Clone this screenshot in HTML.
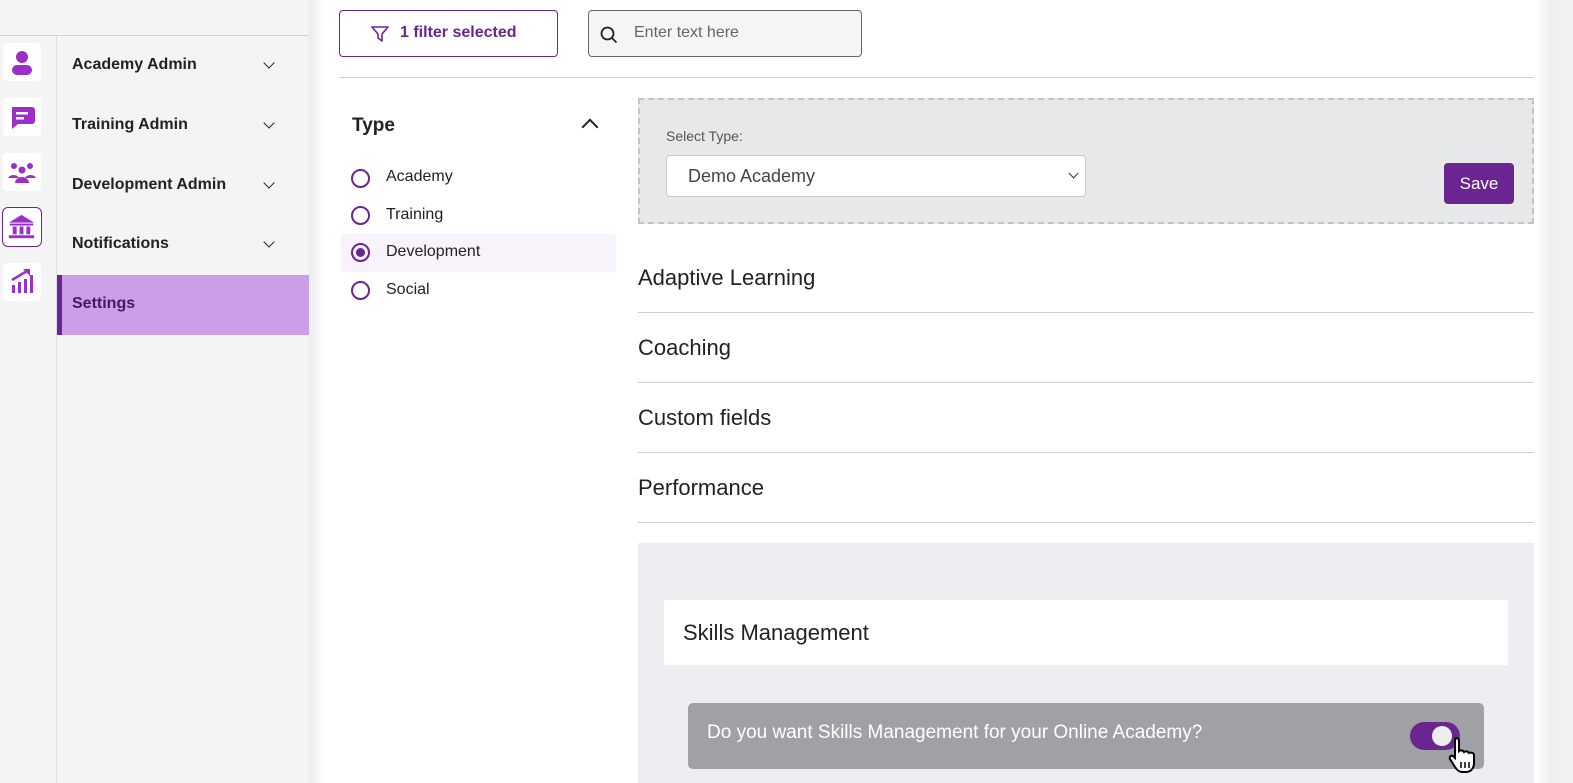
<!DOCTYPE html>
<html><head><style>
*{box-sizing:border-box;margin:0;padding:0}
body{width:1573px;height:783px;overflow:hidden;background:#fff;font-family:"Liberation Sans",Arial,sans-serif;position:relative}
.a{position:absolute}
.nav{font-weight:bold;font-size:16px;color:#222}
.chev{position:absolute;left:265px;width:8px;height:8px;border-right:1.6px solid #222;border-bottom:1.6px solid #222;transform:rotate(45deg)}
.ic{position:absolute;left:3px;width:38px;height:38px;background:#fff;border-radius:4px}
.radio{position:absolute;left:351px;width:19px;height:19px;border:2px solid #6b2590;border-radius:50%}
.rl{position:absolute;left:386px;font-size:16px;color:#222}
.row{position:absolute;left:638px;width:896px;border-bottom:1px solid #d0d0d0;font-size:22px;color:#222}
</style></head><body>
<div class="a" style="left:0;top:0;width:309px;height:783px;background:#f4f4f4"></div>
<div class="a" style="left:0;top:35px;width:309px;height:1px;background:#d4d4d4"></div>
<div class="a" style="left:56px;top:36px;width:1px;height:747px;background:#dedede"></div>
<div class="a" style="left:309px;top:0;width:16px;height:783px;background:linear-gradient(90deg,#ececec,#fff)"></div>
<div class="a" style="left:1535px;top:0;width:38px;height:783px;background:linear-gradient(90deg,#fff,#f0f0f0 40%,#f3f3f3)"></div>

<!-- icons -->
<div class="ic" style="top:43px"><svg width="38" height="38" viewBox="0 0 38 38"><circle cx="19" cy="14" r="6" fill="#9b30c9"/><rect x="9" y="22" width="20" height="10" rx="5" fill="#9b30c9"/></svg></div>
<div class="ic" style="top:98px"><svg width="38" height="38" viewBox="0 0 38 38"><path d="M9 9h20a3 3 0 0 1 3 3v11a3 3 0 0 1-3 3H15l-6 5z" fill="#9b30c9"/><rect x="13" y="14" width="12" height="2.5" fill="#fff"/><rect x="13" y="19" width="8" height="2.5" fill="#fff"/></svg></div>
<div class="ic" style="top:153px"><svg width="38" height="38" viewBox="0 0 38 38"><circle cx="11" cy="13" r="3" fill="#9b30c9"/><circle cx="27" cy="13" r="3" fill="#9b30c9"/><circle cx="19" cy="17" r="3.5" fill="#9b30c9"/><path d="M5 25a6 5 0 0 1 11 0zM22 25a6 5 0 0 1 11 0zM12 30a7 6 0 0 1 14 0z" fill="#9b30c9"/></svg></div>
<div class="ic" style="top:207px;left:2px;width:40px;height:40px;border:1.5px solid #6b2590;border-radius:6px"><svg width="37" height="37" viewBox="0 0 38 38"><path d="M19 7L6 15h26z" fill="#9b30c9"/><rect x="7" y="16" width="24" height="2" fill="#9b30c9"/><rect x="10" y="19" width="4" height="8" fill="#9b30c9"/><rect x="17" y="19" width="4" height="8" fill="#9b30c9"/><rect x="24" y="19" width="4" height="8" fill="#9b30c9"/><rect x="6" y="28" width="26" height="3" fill="#9b30c9"/></svg></div>
<div class="ic" style="top:263px"><svg width="38" height="38" viewBox="0 0 38 38"><rect x="9" y="22" width="3" height="8" fill="#9b30c9"/><rect x="15" y="19" width="3" height="11" fill="#9b30c9"/><rect x="21" y="16" width="3" height="14" fill="#9b30c9"/><rect x="27" y="12" width="3" height="18" fill="#9b30c9"/><path d="M9 17L24 8" stroke="#9b30c9" stroke-width="2.5"/><path d="M20 6h7v7z" fill="#9b30c9"/></svg></div>

<div class="a nav" style="left:72px;top:56px">Academy Admin</div><div class="chev" style="top:59px"></div>
<div class="a nav" style="left:72px;top:116px">Training Admin</div><div class="chev" style="top:119px"></div>
<div class="a nav" style="left:72px;top:176px">Development Admin</div><div class="chev" style="top:179px"></div>
<div class="a nav" style="left:72px;top:235px">Notifications</div><div class="chev" style="top:238px"></div>
<div class="a" style="left:57px;top:275px;width:252px;height:60px;background:#cd9ee8;border-left:5px solid #6b2590"></div>
<div class="a nav" style="left:72px;top:295px;color:#4a1466">Settings</div>

<!-- top controls -->
<div class="a" style="left:339px;top:10px;width:219px;height:47px;border:1px solid #6b2590;border-radius:4px;color:#6b2590;font-weight:bold;font-size:16px;padding:13px 0 0 60px">1 filter selected</div>
<svg class="a" style="left:370px;top:24px" width="20" height="20" viewBox="0 0 20 20"><path d="M2 3h16l-6 7v7l-4-3v-4z" fill="none" stroke="#6b2590" stroke-width="1.6" stroke-linejoin="round"/></svg>
<div class="a" style="left:588px;top:10px;width:274px;height:47px;border:1px solid #666;border-radius:4px;background:#f5f5f5;color:#666;font-size:16px;padding:13px 0 0 45px">Enter text here</div>
<svg class="a" style="left:599px;top:25px" width="20" height="20" viewBox="0 0 20 20"><circle cx="8.5" cy="8.5" r="6" fill="none" stroke="#222" stroke-width="1.8"/><path d="M13 13l4.5 4.5" stroke="#222" stroke-width="1.8"/></svg>
<div class="a" style="left:339px;top:77px;width:1195px;height:1px;background:#d0d0d0"></div>

<!-- type filter -->
<div class="a" style="left:352px;top:115px;font-weight:bold;font-size:19px;color:#222">Type</div>
<div class="a" style="left:584px;top:121px;width:12px;height:12px;border-left:2.2px solid #222;border-top:2.2px solid #222;transform:rotate(45deg)"></div>
<div class="radio" style="top:169px"></div><div class="rl" style="top:168px">Academy</div>
<div class="radio" style="top:206px"></div><div class="rl" style="top:206px">Training</div>
<div class="a" style="left:341px;top:234px;width:275px;height:38px;background:#f8f3fb;border-radius:3px"></div>
<div class="radio" style="top:243px"></div><div class="a" style="left:356px;top:248px;width:9px;height:9px;background:#6b2590;border-radius:50%"></div><div class="rl" style="top:243px">Development</div>
<div class="radio" style="top:281px"></div><div class="rl" style="top:281px">Social</div>

<!-- select box -->
<div class="a" style="left:638px;top:98px;width:896px;height:126px;background:#e7e8ea;border:2px dashed #c4c4c4"></div>
<div class="a" style="left:666px;top:128px;font-size:14px;color:#555">Select Type:</div>
<div class="a" style="left:666px;top:155px;width:420px;height:42px;background:#fff;border:1px solid #ccc;border-radius:4px;font-size:18px;color:#444;padding:10px 0 0 21px">Demo Academy</div>
<div class="a" style="left:1070px;top:170px;width:7px;height:7px;border-right:1.6px solid #333;border-bottom:1.6px solid #333;transform:rotate(45deg)"></div>
<div class="a" style="left:1444px;top:163px;width:70px;height:41px;background:#6b2590;border-radius:4px;color:#fff;font-size:17px;text-align:center;padding-top:11px">Save</div>

<div class="row" style="top:243px;height:70px;padding-top:22px">Adaptive Learning</div>
<div class="row" style="top:313px;height:70px;padding-top:22px">Coaching</div>
<div class="row" style="top:383px;height:70px;padding-top:22px">Custom fields</div>
<div class="row" style="top:453px;height:70px;padding-top:22px">Performance</div>

<div class="a" style="left:638px;top:543px;width:896px;height:240px;background:#edeef1"></div>
<div class="a" style="left:664px;top:600px;width:844px;height:65px;background:#fff;font-size:22px;color:#222;padding:20px 0 0 19px">Skills Management</div>
<div class="a" style="left:688px;top:703px;width:796px;height:66px;background:#9fa1a5;border-radius:5px;color:#fff;font-size:19px;padding:19px 0 0 19px">Do you want Skills Management for your Online Academy?</div>
<div class="a" style="left:1410px;top:722px;width:50px;height:28px;background:#6b2590;border-radius:14px"></div>
<div class="a" style="left:1432px;top:726px;width:20px;height:20px;background:#eee;border-radius:50%"></div>
<svg class="a" style="left:1448px;top:736px" width="34" height="38" viewBox="0 0 34 38"><path d="M8 2c2 0 3 1 3 3v10c1-1 4-1 5 1 1-1 4-1 5 1 2-1 5 0 5 2v8c0 5-3 9-8 9h-4c-3 0-5-2-7-5l-5-8c-1-2 1-4 3-3l2 2V5c0-2 1-3 1-3z" fill="#fff" stroke="#000" stroke-width="2"/><path d="M13 26v6M17 26v6M21 26v6" stroke="#000" stroke-width="1.5"/></svg>
</body></html>
